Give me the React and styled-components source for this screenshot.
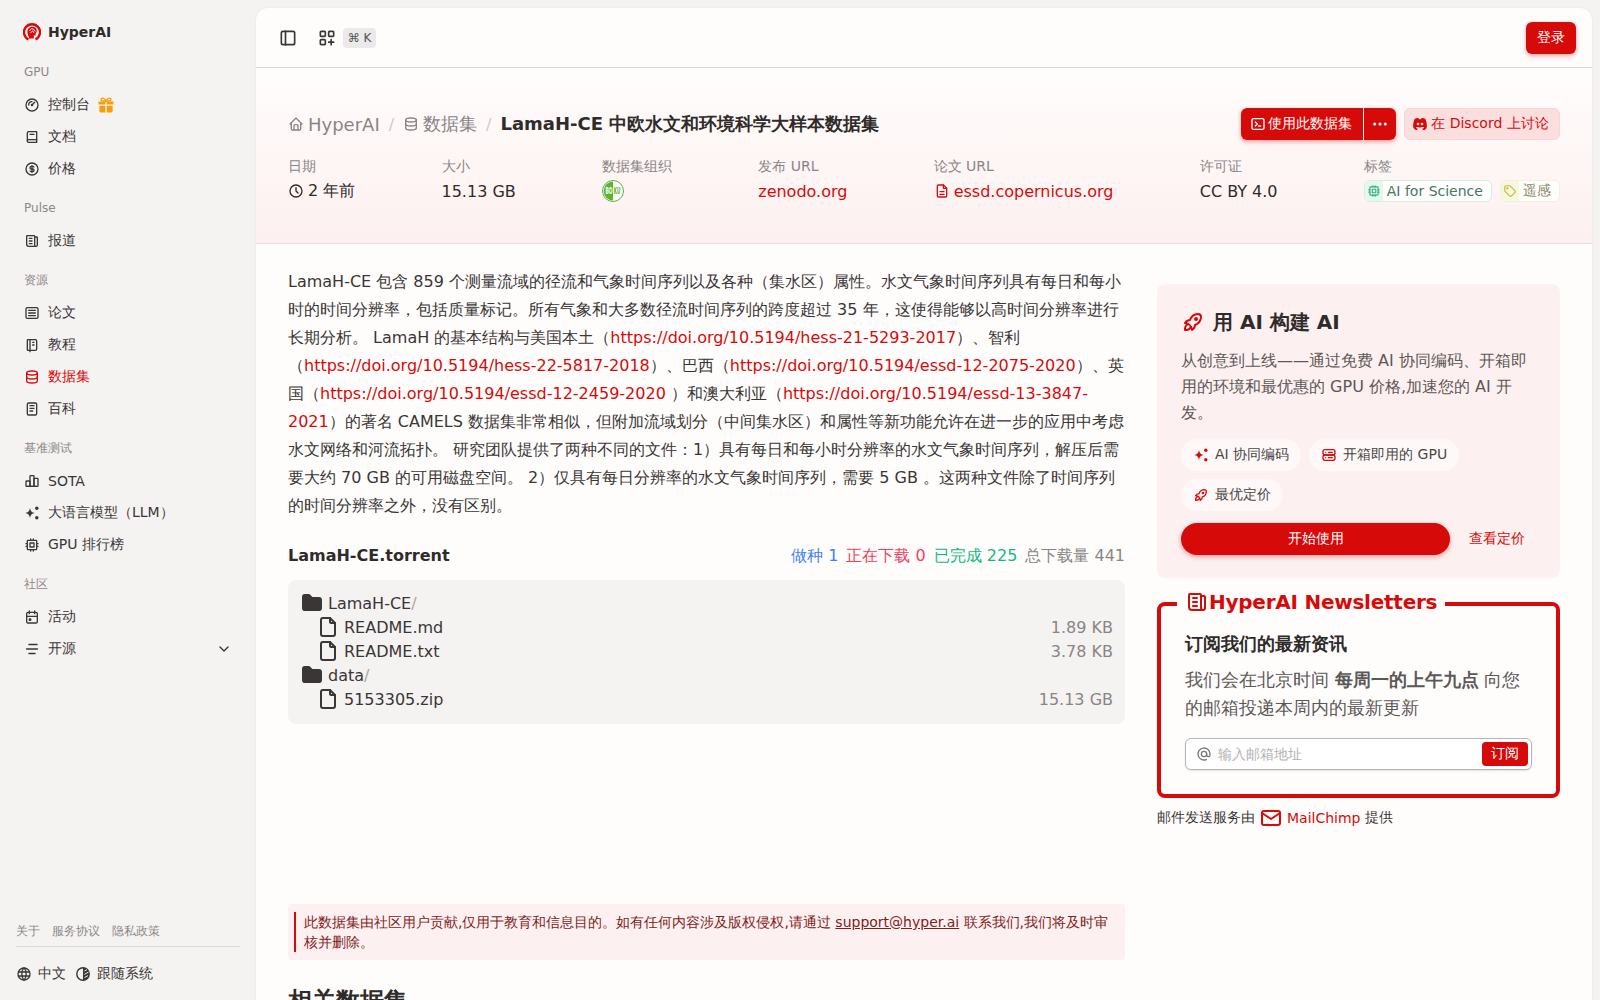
import styled, { createGlobalStyle } from "styled-components";
import {
  TbGauge,
  TbBook2,
  TbCoin,
  TbNews,
  TbArticle,
  TbNotebook,
  TbDatabase,
  TbNotes,
  TbChartBar,
  TbCpu,
  TbCalendarEvent,
  TbChevronDown,
  TbWorld,
  TbLayoutSidebar,
  TbLayoutGridAdd,
  TbHome,
  TbClock,
  TbTerminal2,
  TbDots,
  TbBrandDiscordFilled,
  TbFileDescription,
  TbTag,
  TbRocket,
  TbServer2,
  TbFolderFilled,
  TbFile,
  TbAt,
  TbMail,
} from "react-icons/tb";

const RED = "#d70a0a";
const FONT = `"DejaVu Sans", sans-serif`;

const GlobalStyle = createGlobalStyle`
  html, body {
    margin: 0;
    padding: 0;
    height: 100%;
    overflow: hidden;
    background: #f5f2f2;
    color: #2f2b2b;
    font-family: ${FONT};
    text-spacing-trim: space-all;
  }
  * {
    box-sizing: border-box;
  }
`;

const Shell = styled.div`
  display: flex;
  height: 100vh;
  overflow: hidden;
`;

const Sidebar = styled.aside`
  width: 256px;
  flex: none;
  display: flex;
  flex-direction: column;
  padding: 0 16px 0;
  height: 100vh;
`;
const Logo = styled.div`
  display: flex;
  align-items: center;
  gap: 7px;
  height: 32px;
  margin: 16px 0 0 7px;
  font-size: 14px;
  font-weight: 700;
  color: #2f2b2b;
`;
const NavGroups = styled.nav`
  flex: 1;
  padding-top: 8px;
`;
const NavGroup = styled.div`
  margin-bottom: 7px;
`;
const GroupLabel = styled.div`
  height: 33px;
  line-height: 32px;
  padding-left: 8px;
  font-size: 12px;
  color: #8d8888;
`;
const NavItem = styled.div`
  display: flex;
  align-items: center;
  height: 32px;
  padding-left: 8px;
  font-size: 14px;
  gap: 8px;
  color: ${(p) => (p.$active ? RED : "#3a3636")};
  svg {
    width: 16px;
    height: 16px;
    flex: none;
  }
`;
const NavChevron = styled.span`
  margin-left: auto;
  margin-right: 8px;
  display: flex;
`;
const GiftIcon = styled.span`
  display: flex;
`;
const FooterLinks = styled.div`
  display: flex;
  gap: 12px;
  font-size: 12px;
  color: #8d8888;
  padding-bottom: 5px;
  border-bottom: 1px solid #dddada;
  height: 25px;
  align-items: center;
`;
const FooterRow = styled.div`
  display: flex;
  align-items: center;
  height: 53px;
  font-size: 14px;
  gap: 9px;
  padding-bottom: 0;
  color: #3a3636;
`;
const FooterItem = styled.span`
  display: flex;
  align-items: center;
  gap: 6px;
`;

const Main = styled.main`
  flex: 1;
  margin: 8px 8px 0 0;
  background: #fffdfc;
  border-radius: 12px 12px 0 0;
  box-shadow: 0 0 2px rgba(0, 0, 0, 0.08);
  overflow: hidden;
  min-width: 0;
`;
const TopBar = styled.header`
  height: 60px;
  display: flex;
  align-items: center;
  padding: 0 16px 0 22px;
  border-bottom: 1px solid #d9d6d6;
`;
const TopIcon = styled.span`
  display: flex;
  color: #3a3636;
  margin-right: 19px;
`;
const TopIconTight = styled(TopIcon)`
  margin-right: 6px;
`;
const Kbd = styled.span`
  width: 33px;
  height: 20px;
  border-radius: 4px;
  background: #ebe9e9;
  font-size: 12px;
  color: #555;
  display: flex;
  align-items: center;
  justify-content: center;
`;
const LoginButton = styled.button`
  margin-left: auto;
  height: 32px;
  width: 50px;
  border: none;
  border-radius: 6px;
  background: ${RED};
  color: #fff;
  font: 14px ${FONT};
  box-shadow: 0 2px 5px rgba(215, 10, 10, 0.35);
`;

const Hero = styled.section`
  height: 176px;
  padding: 40px 32px 0;
  background: linear-gradient(180deg, #fffdfc 0%, #fdf0f0 100%);
  border-bottom: 1px solid #e3dede;
`;
const HeroTop = styled.div`
  display: flex;
  align-items: center;
  justify-content: space-between;
  height: 32px;
`;
const Crumbs = styled.div`
  display: flex;
  align-items: center;
  font-size: 18px;
  color: #8a8585;
`;
const Crumb = styled.span`
  display: flex;
  align-items: center;
  gap: 4px;
`;
const CrumbSep = styled.span`
  margin: 0 9px;
  color: #cfcaca;
  font-size: 16px;
`;
const CrumbTitle = styled.strong`
  font-weight: 700;
  color: #2f2b2b;
`;
const Actions = styled.div`
  display: flex;
  align-items: center;
  gap: 8px;
`;
const SplitButton = styled.div`
  display: flex;
  gap: 1px;
  border-radius: 6px;
  overflow: hidden;
  box-shadow: 0 2px 5px rgba(215, 10, 10, 0.35);
`;
const PrimaryPart = styled.div`
  height: 32px;
  display: flex;
  align-items: center;
  justify-content: center;
  gap: 2px;
  width: ${(p) => p.$w}px;
  padding-right: ${(p) => p.$pr || 0}px;
  background: ${RED};
  color: #fff;
  font-size: 14px;
`;
const SoftButton = styled.div`
  height: 32px;
  width: 156px;
  display: flex;
  align-items: center;
  justify-content: center;
  gap: 3px;
  padding-right: 3px;
  border-radius: 6px;
  background: #fbdfdf;
  border: 1px solid #f8d6d6;
  color: ${RED};
  font-size: 14px;
`;
const Meta = styled.div`
  display: flex;
  justify-content: space-between;
  margin-top: 14px;
`;
const MetaCol = styled.div`
  display: flex;
  flex-direction: column;
`;
const MetaLabel = styled.div`
  font-size: 14px;
  line-height: 24px;
  color: #8a8585;
`;
const MetaValue = styled.div`
  display: flex;
  align-items: center;
  gap: 4px;
  height: 26px;
  font-size: 16px;
  color: ${(p) => (p.$link ? RED : "#2f2b2b")};
`;
const Tags = styled.div`
  display: flex;
  gap: 8px;
  margin-top: 2px;
`;
const Tag = styled.span`
  display: flex;
  align-items: center;
  height: 22px;
  border-radius: 6px;
  overflow: hidden;
  background: #fff;
  font-size: 14px;
  border: 1px solid ${(p) => p.$border};
  color: ${(p) => p.$color};
`;
const TagIcon = styled.span`
  width: 18px;
  height: 100%;
  display: flex;
  align-items: center;
  justify-content: center;
  background: ${(p) => p.$bg};
  color: ${(p) => p.$color};
  margin-right: 4px;
`;
const TagText = styled.span`
  padding-right: 8px;
`;

const Body = styled.div`
  display: flex;
  gap: 32px;
  padding: 24px 32px 0;
`;
const LeftCol = styled.div`
  flex: 1;
  min-width: 0;
`;
const RightCol = styled.div`
  width: 403px;
  flex: none;
  padding-top: 16px;
`;
const Paragraph = styled.p`
  margin: 0;
  font-size: 16px;
  line-height: 28px;
  color: #3a3636;
  a {
    color: ${RED};
    text-decoration: none;
  }
`;
const TorrentHead = styled.div`
  display: flex;
  align-items: center;
  justify-content: space-between;
  margin-top: 23px;
  height: 24px;
`;
const TorrentName = styled.div`
  font-size: 16px;
  font-weight: 700;
`;
const Stats = styled.div`
  display: flex;
  gap: 8px;
  padding-top: 2px;
  font-size: 16px;
`;
const Stat = styled.span`
  color: ${(p) => p.$color};
`;
const Tree = styled.div`
  margin-top: 13px;
  padding: 11px 12px 13px;
  border-radius: 8px;
  background: #f5f2f2;
`;
const TreeRow = styled.div`
  display: flex;
  align-items: center;
  height: 24px;
  font-size: 16px;
  color: #3a3636;
  padding-left: ${(p) => (p.$nested ? "16px" : "0")};
`;
const TreeName = styled.span`
  margin-left: 4px;
`;
const Slash = styled.span`
  color: #aaa5a5;
`;
const TreeSize = styled.span`
  margin-left: auto;
  color: #8a8585;
`;
const Notice = styled.div`
  margin-top: 180px;
  padding: 8px 6px;
  border-radius: 4px;
  background: #fdf0f0;
`;
const NoticeInner = styled.div`
  border-left: 2px solid ${RED};
  padding-left: 8px;
  font-size: 14px;
  line-height: 20px;
  color: #7f1d1d;
  a {
    color: inherit;
  }
`;
const SectionTitle = styled.h2`
  margin: 25px 0 0;
  font-size: 24px;
  font-weight: 700;
  color: #2f2b2b;
`;

const PromoCard = styled.div`
  border-radius: 8px;
  background: #fdf0f0;
  padding: 24px 24px 23px;
`;
const PromoTitle = styled.div`
  display: flex;
  align-items: center;
  gap: 8px;
  font-size: 20px;
  font-weight: 700;
  line-height: 28px;
  color: #2f2b2b;
`;
const PromoText = styled.p`
  margin: 12px 0 0;
  font-size: 16px;
  line-height: 26px;
  color: #5d5858;
`;
const Chips = styled.div`
  display: flex;
  flex-wrap: wrap;
  gap: 8px;
  margin-top: 13px;
`;
const Chip = styled.span`
  display: flex;
  align-items: center;
  gap: 6px;
  height: 32px;
  padding: 0 12px;
  border-radius: 16px;
  background: #fff8f8;
  font-size: 14px;
  color: #4a4646;
  svg {
    color: ${RED};
  }
`;
const PromoActions = styled.div`
  display: flex;
  align-items: center;
  margin-top: 12px;
`;
const StartButton = styled.button`
  width: 269px;
  height: 32px;
  border: none;
  border-radius: 16px;
  background: ${RED};
  color: #fff;
  font: 14px ${FONT};
  box-shadow: 0 2px 5px rgba(215, 10, 10, 0.35);
`;
const PriceLink = styled.a`
  margin-left: 19px;
  font-size: 14px;
  color: ${RED};
`;
const NewsBox = styled.fieldset`
  margin: 12px 0 0;
  padding: 10px 24px 24px;
  border: 4px solid ${RED};
  border-radius: 8px;
`;
const NewsLegend = styled.legend`
  display: flex;
  align-items: center;
  gap: 0;
  margin-left: -8px;
  padding: 0 8px 4px;
  font-size: 20px;
  font-weight: 700;
  letter-spacing: -0.25px;
  color: ${RED};
`;
const NewsTitle = styled.div`
  font-size: 18px;
  font-weight: 700;
  line-height: 28px;
  margin-top: 2px;
`;
const NewsText = styled.p`
  margin: 8px 0 0;
  font-size: 18px;
  line-height: 28px;
  color: #5d5858;
  strong {
    font-weight: 700;
  }
`;
const EmailField = styled.div`
  display: flex;
  align-items: center;
  height: 32px;
  margin-top: 16px;
  padding: 0 3px 0 10px;
  border: 1px solid #b9b4b4;
  border-radius: 6px;
  background: #fff;
  box-shadow: 0 1px 2px rgba(0, 0, 0, 0.1);
  color: #777;
`;
const EmailInput = styled.input`
  flex: 1;
  min-width: 0;
  border: none;
  outline: none;
  background: transparent;
  margin-left: 4px;
  font: 14px ${FONT};
  &::placeholder {
    color: #b5b1b1;
  }
`;
const SubscribeButton = styled.button`
  width: 46px;
  height: 24px;
  padding: 0;
  border: none;
  border-radius: 4px;
  background: ${RED};
  color: #fff;
  font: 14px ${FONT};
`;
const Provider = styled.div`
  display: flex;
  align-items: center;
  gap: 4px;
  margin-top: 8px;
  height: 24px;
  font-size: 14px;
  color: #3a3636;
`;
const ProviderLink = styled.span`
  display: flex;
  align-items: center;
  gap: 4px;
  color: ${RED};
`;

const LogoMark = () => (
  <svg width="18" height="18" viewBox="0 0 18 18">
    <path d="M5.5 16.4 A8 8 0 1 1 12.5 16.4" fill="none" stroke={RED} strokeWidth="2.4" />
    <path
      d="M6.2 15.4 C6 13.4 4.4 12 4.4 8.8 C4.4 5.8 6.8 3.8 9.4 3.8 C12 3.8 13.8 5.8 13.8 8 C13.8 9.6 13 10.2 12.6 10.8 L12.6 12.4 L10.8 12.6 L10.8 15.4 Z"
      fill={RED}
    />
    <path
      d="M6.4 8 L8.6 5.6 L11 6.6 L12.2 8.6 M7.4 9.8 L9.8 8 L11 10"
      stroke="#fff"
      strokeWidth="0.9"
      fill="none"
    />
  </svg>
);

const Gift = () => (
  <svg width="14" height="14" viewBox="0 0 14 14" fill="#f59e0b">
    <path d="M0.5 4 H6.4 V6.6 H0.5 Z M7.6 4 H13.5 V6.6 H7.6 Z M1.2 7.6 H6.4 V13.5 H2.4 Q1.2 13.5 1.2 12.3 Z M7.6 7.6 H12.8 V12.3 Q12.8 13.5 11.6 13.5 H7.6 Z" />
    <path
      d="M7 3.6 C5.5 0 2.2 0.6 2.8 2.6 C3 3.4 4 3.6 7 3.6 C10 3.6 11 3.4 11.2 2.6 C11.8 0.6 8.5 0 7 3.6 Z"
      fill="none"
      stroke="#f59e0b"
      strokeWidth="1.2"
    />
  </svg>
);

const Sparkle = ({ size = 16 }) => (
  <svg width={size} height={size} viewBox="0 0 16 16" fill="currentColor">
    <path d="M6 3 C6.6 6.2 7.6 7.4 11 8 C7.6 8.6 6.6 9.8 6 13 C5.4 9.8 4.4 8.6 1 8 C4.4 7.4 5.4 6.2 6 3 Z" />
    <circle cx="12.8" cy="3.2" r="1.7" />
    <circle cx="12.8" cy="12.8" r="1.7" />
  </svg>
);

const Lines = () => (
  <svg width="16" height="16" viewBox="0 0 16 16" fill="none" stroke="currentColor" strokeWidth="1.5" strokeLinecap="round">
    <path d="M5 3.4 H13 M2.6 8 H13.4 M5 12.6 H11" />
  </svg>
);

const HalfTheme = () => (
  <svg width="16" height="16" viewBox="0 0 16 16" fill="none" stroke="currentColor" strokeWidth="1.4">
    <circle cx="8" cy="8" r="6.2" />
    <path d="M8 1.8 A6.2 6.2 0 0 1 8 14.2 Z" fill="currentColor" stroke="none" />
    <path d="M9.4 5 L12 3.6 M9.4 8.4 L13.6 6 M9.4 11.6 L13 9.6" stroke="#f5f2f2" strokeWidth="1" />
  </svg>
);

const OrgBadge = () => (
  <svg width="22" height="22" viewBox="0 0 22 22">
    <circle cx="11" cy="11" r="10.5" fill="#fff" stroke="#5cb531" />
    <path d="M11 1.6 A9.4 9.4 0 0 0 11 20.4 Z" fill="#5cb531" />
    <text x="3.4" y="14" fontSize="8" fontWeight="700" fill="#fff" textLength="7" lengthAdjust="spacingAndGlyphs">BO</text>
    <text x="11.8" y="14" fontSize="8" fontWeight="700" fill="#5cb531" textLength="6.6" lengthAdjust="spacingAndGlyphs">KU</text>
  </svg>
);

const navData = [
  {
    label: "GPU",
    items: [
      { icon: <TbGauge />, text: "控制台", extra: <GiftIcon><Gift /></GiftIcon> },
      { icon: <TbBook2 />, text: "文档" },
      { icon: <TbCoin />, text: "价格" },
    ],
  },
  { label: "Pulse", items: [{ icon: <TbNews />, text: "报道" }] },
  {
    label: "资源",
    items: [
      { icon: <TbArticle />, text: "论文" },
      { icon: <TbNotebook />, text: "教程" },
      { icon: <TbDatabase />, text: "数据集", active: true },
      { icon: <TbNotes />, text: "百科" },
    ],
  },
  {
    label: "基准测试",
    items: [
      { icon: <TbChartBar />, text: "SOTA" },
      { icon: <Sparkle />, text: "大语言模型（LLM）" },
      { icon: <TbCpu />, text: "GPU 排行榜" },
    ],
  },
  {
    label: "社区",
    items: [
      { icon: <TbCalendarEvent />, text: "活动" },
      { icon: <Lines />, text: "开源", chevron: true },
    ],
  },
];

const treeRows = [
  { name: "LamaH-CE", folder: true },
  { name: "README.md", size: "1.89 KB" },
  { name: "README.txt", size: "3.78 KB" },
  { name: "data", folder: true },
  { name: "5153305.zip", size: "15.13 GB" },
];

const App = () => {
  return (
    <Shell>
      <GlobalStyle />
      <Sidebar>
        <Logo>
          <LogoMark />
          HyperAI
        </Logo>
        <NavGroups>
          {navData.map((group) => (
            <NavGroup key={group.label}>
              <GroupLabel>{group.label}</GroupLabel>
              {group.items.map((item) => (
                <NavItem key={item.text} $active={item.active}>
                  {item.icon}
                  {item.text}
                  {item.extra}
                  {item.chevron && (
                    <NavChevron>
                      <TbChevronDown />
                    </NavChevron>
                  )}
                </NavItem>
              ))}
            </NavGroup>
          ))}
        </NavGroups>
        <FooterLinks>
          <span>关于</span>
          <span>服务协议</span>
          <span>隐私政策</span>
        </FooterLinks>
        <FooterRow>
          <FooterItem>
            <TbWorld size={16} />
            中文
          </FooterItem>
          <FooterItem>
            <HalfTheme />
            跟随系统
          </FooterItem>
        </FooterRow>
      </Sidebar>

      <Main>
        <TopBar>
          <TopIcon>
            <TbLayoutSidebar size={20} />
          </TopIcon>
          <TopIconTight>
            <TbLayoutGridAdd size={20} />
          </TopIconTight>
          <Kbd>⌘ K</Kbd>
          <LoginButton>登录</LoginButton>
        </TopBar>

        <Hero>
          <HeroTop>
            <Crumbs>
              <Crumb>
                <TbHome size={16} />
                HyperAI
              </Crumb>
              <CrumbSep>/</CrumbSep>
              <Crumb>
                <TbDatabase size={16} />
                数据集
              </Crumb>
              <CrumbSep>/</CrumbSep>
              <CrumbTitle>LamaH-CE 中欧水文和环境科学大样本数据集</CrumbTitle>
            </Crumbs>
            <Actions>
              <SplitButton>
                <PrimaryPart $w={122} $pr={2}>
                  <TbTerminal2 size={16} />
                  使用此数据集
                </PrimaryPart>
                <PrimaryPart $w={32}>
                  <TbDots size={18} />
                </PrimaryPart>
              </SplitButton>
              <SoftButton>
                <TbBrandDiscordFilled size={16} />在 Discord 上讨论
              </SoftButton>
            </Actions>
          </HeroTop>
          <Meta>
            <MetaCol>
              <MetaLabel>日期</MetaLabel>
              <MetaValue>
                <TbClock size={16} />2 年前
              </MetaValue>
            </MetaCol>
            <MetaCol>
              <MetaLabel>大小</MetaLabel>
              <MetaValue>15.13 GB</MetaValue>
            </MetaCol>
            <MetaCol>
              <MetaLabel>数据集组织</MetaLabel>
              <MetaValue>
                <OrgBadge />
              </MetaValue>
            </MetaCol>
            <MetaCol>
              <MetaLabel>发布 URL</MetaLabel>
              <MetaValue $link>zenodo.org</MetaValue>
            </MetaCol>
            <MetaCol>
              <MetaLabel>论文 URL</MetaLabel>
              <MetaValue $link>
                <TbFileDescription size={16} />
                essd.copernicus.org
              </MetaValue>
            </MetaCol>
            <MetaCol>
              <MetaLabel>许可证</MetaLabel>
              <MetaValue>CC BY 4.0</MetaValue>
            </MetaCol>
            <MetaCol>
              <MetaLabel>标签</MetaLabel>
              <Tags>
                <Tag $border="#d5efe3" $color="#47745f">
                  <TagIcon $bg="#e6f7ef" $color="#34b27b">
                    <TbCpu size={14} />
                  </TagIcon>
                  <TagText>AI for Science</TagText>
                </Tag>
                <Tag $border="#f3f2d5" $color="#87835a">
                  <TagIcon $bg="#f7f6df" $color="#c5bb3e">
                    <TbTag size={14} />
                  </TagIcon>
                  <TagText>遥感</TagText>
                </Tag>
              </Tags>
            </MetaCol>
          </Meta>
        </Hero>

        <Body>
          <LeftCol>
            <Paragraph>
              LamaH-CE 包含 859 个测量流域的径流和气象时间序列以及各种（集水区）属性。水文气象时间序列具有每日和每小时的时间分辨率，包括质量标记。所有气象和大多数径流时间序列的跨度超过 35 年，这使得能够以高时间分辨率进行长期分析。 LamaH 的基本结构与美国本土（
              <a>https://doi.org/10.5194/hess-21-5293-2017</a>）、智利（
              <a>https://doi.org/10.5194/hess-22-5817-2018</a>）、巴西（
              <a>https://doi.org/10.5194/essd-12-2075-2020</a>）、英国（
              <a>https://doi.org/10.5194/essd-12-2459-2020</a> ）和澳大利亚（
              <a>https://doi.org/10.5194/essd-13-3847-2021</a>
              ）的著名 CAMELS 数据集非常相似，但附加流域划分（中间集水区）和属性等新功能允许在进一步的应用中考虑水文网络和河流拓扑。 研究团队提供了两种不同的文件：1）具有每日和每小时分辨率的水文气象时间序列，解压后需要大约 70 GB 的可用磁盘空间。 2）仅具有每日分辨率的水文气象时间序列，需要 5 GB 。这两种文件除了时间序列的时间分辨率之外，没有区别。
            </Paragraph>
            <TorrentHead>
              <TorrentName>LamaH-CE.torrent</TorrentName>
              <Stats>
                <Stat $color="#3b82f6">做种 1</Stat>
                <Stat $color="#f43f5e">正在下载 0</Stat>
                <Stat $color="#10b981">已完成 225</Stat>
                <Stat $color="#8a8585">总下载量 441</Stat>
              </Stats>
            </TorrentHead>
            <Tree>
              {treeRows.map((row) => (
                <TreeRow key={row.name} $nested={!row.folder}>
                  {row.folder ? <TbFolderFilled size={24} /> : <TbFile size={24} />}
                  <TreeName>
                    {row.name}
                    {row.folder && <Slash>/</Slash>}
                  </TreeName>
                  {row.size && <TreeSize>{row.size}</TreeSize>}
                </TreeRow>
              ))}
            </Tree>
            <Notice>
              <NoticeInner>
                此数据集由社区用户贡献,仅用于教育和信息目的。如有任何内容涉及版权侵权,请通过 <a href="#">support@hyper.ai</a> 联系我们,我们将及时审核并删除。
              </NoticeInner>
            </Notice>
            <SectionTitle>相关数据集</SectionTitle>
          </LeftCol>

          <RightCol>
            <PromoCard>
              <PromoTitle>
                <TbRocket size={24} color={RED} />用 AI 构建 AI
              </PromoTitle>
              <PromoText>
                从创意到上线——通过免费 AI 协同编码、开箱即用的环境和最优惠的 GPU 价格,加速您的 AI 开发。
              </PromoText>
              <Chips>
                <Chip>
                  <Sparkle size={16} />
                  AI 协同编码
                </Chip>
                <Chip>
                  <TbServer2 size={16} />
                  开箱即用的 GPU
                </Chip>
                <Chip>
                  <TbRocket size={16} />
                  最优定价
                </Chip>
              </Chips>
              <PromoActions>
                <StartButton>开始使用</StartButton>
                <PriceLink>查看定价</PriceLink>
              </PromoActions>
            </PromoCard>

            <NewsBox>
              <NewsLegend>
                <TbNews size={24} />
                HyperAI Newsletters
              </NewsLegend>
              <NewsTitle>订阅我们的最新资讯</NewsTitle>
              <NewsText>
                我们会在北京时间 <strong>每周一的上午九点</strong> 向您的邮箱投递本周内的最新更新
              </NewsText>
              <EmailField>
                <TbAt size={16} />
                <EmailInput placeholder="输入邮箱地址" />
                <SubscribeButton>订阅</SubscribeButton>
              </EmailField>
            </NewsBox>
            <Provider>
              邮件发送服务由
              <ProviderLink>
                <TbMail size={24} />
                MailChimp
              </ProviderLink>
              提供
            </Provider>
          </RightCol>
        </Body>
      </Main>
    </Shell>
  );
};

export default App;
